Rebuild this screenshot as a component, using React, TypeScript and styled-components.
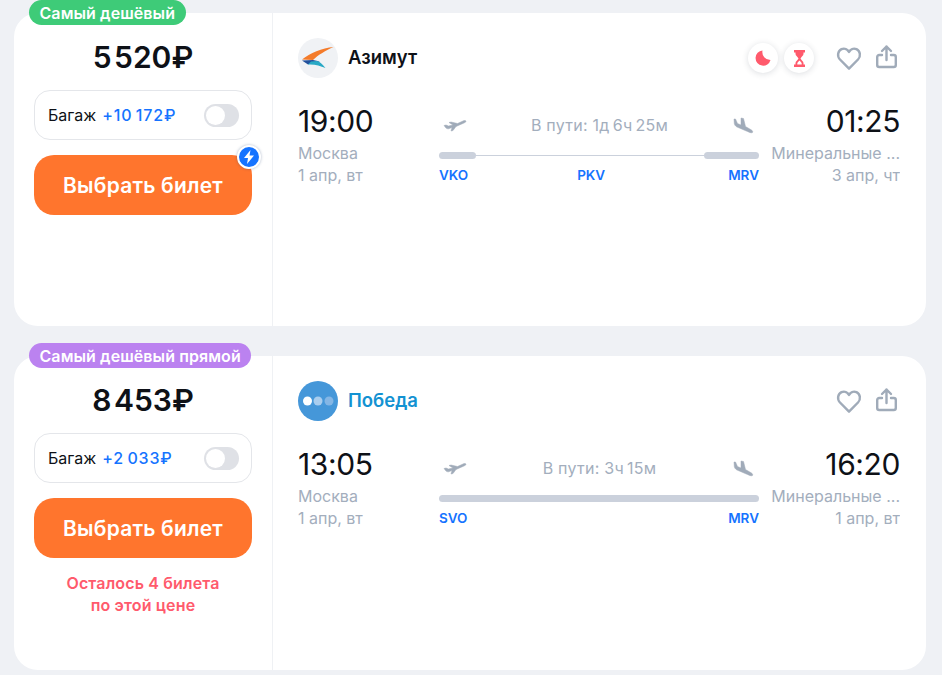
import React from 'react';
import styled, {createGlobalStyle} from 'styled-components';

const GlobalStyle = createGlobalStyle`
  html, body {
    margin: 0;
    padding: 0;
    height: 100%;
    overflow: hidden;
    background: #eff1f5;
    font-family: Inter, "Noto Sans", sans-serif;
    color: #0e1117;
  }
`;

const Page = styled.div`
  display: flex;
  flex-direction: column;
  gap: 30px;
  padding: 13px 16px 0 14px;
`;

const Card = styled.article<{$height: number}>`
  position: relative;
  display: flex;
  height: ${p => p.$height}px;
  background: #fff;
  border-radius: 24px;
`;

const Badge = styled.div<{$color: string}>`
  position: absolute;
  left: 15px;
  top: -13px;
  height: 25px;
  padding: 0 10.5px;
  display: flex;
  align-items: center;
  border-radius: 13px;
  background: ${p => p.$color};
  color: #fff;
  font-size: 16px;
  font-weight: 600;
  letter-spacing: 0.08px;
  line-height: 1;
  white-space: nowrap;
`;

const BuyColumn = styled.div`
  width: 259px;
  flex: none;
  box-sizing: border-box;
  padding: 0 20px;
  border-right: 1px solid #eff1f4;
  display: flex;
  flex-direction: column;
`;

const Price = styled.div`
  height: 77px;
  display: flex;
  align-items: center;
  justify-content: center;
  padding-top: 11px;
  box-sizing: border-box;
  font-size: 30px;
  font-weight: 600;
`;

const BaggageBox = styled.div`
  height: 50px;
  box-sizing: border-box;
  border: 1px solid #e4e6ea;
  border-radius: 16px;
  display: flex;
  align-items: center;
  padding: 0 12px 0 13px;
  font-size: 16px;
`;

const BaggagePrice = styled.span`
  margin-left: 6px;
  color: #1573ff;
  font-weight: 500;
  letter-spacing: 0.8px;
`;

const Toggle = styled.span`
  margin-left: auto;
  width: 35px;
  height: 23px;
  border-radius: 12px;
  background: #dfe1e6;
  display: flex;
  align-items: center;
  padding-left: 2px;
  box-sizing: border-box;

  &::before {
    content: '';
    width: 19px;
    height: 19px;
    border-radius: 50%;
    background: #fff;
  }
`;

const BuyButton = styled.button`
  position: relative;
  margin-top: 15px;
  height: 60px;
  border: 0;
  border-radius: 20px;
  background: #ff752d;
  color: #fff;
  font-family: inherit;
  font-size: 21px;
  font-weight: 600;
  letter-spacing: 0.2px;
  flex: none;
`;

const BoltBadge = styled.span`
  position: absolute;
  right: -9px;
  top: -10px;
  width: 20px;
  height: 20px;
  border: 2px solid #fff;
  border-radius: 50%;
  background: #1573ff;
  box-shadow: 0 0 3px rgba(30, 60, 110, 0.35);
  display: flex;
  align-items: center;
  justify-content: center;
`;

const SeatsLeft = styled.div`
  margin-top: 14px;
  text-align: center;
  color: #ff5a6c;
  font-size: 16px;
  font-weight: 600;
  letter-spacing: 0.15px;
  line-height: 22px;
`;

const FlightColumn = styled.div`
  flex: 1;
  padding: 0 26px 0 25px;
  display: flex;
  flex-direction: column;
`;

const CarrierRow = styled.div`
  height: 40px;
  margin-top: 25px;
  display: flex;
  align-items: center;
`;

const CarrierLogo = styled.svg`
  width: 40px;
  height: 40px;
  flex: none;
`;

const CarrierName = styled.div<{$color: string}>`
  margin: -2px 0 0 10px;
  font-size: 18.5px;
  font-weight: 600;
  color: ${p => p.$color};
`;

const Actions = styled.div`
  margin: 0 -1px 0 auto;
  display: flex;
  align-items: center;
`;

const Hints = styled.div`
  display: flex;
  gap: 6px;
  margin-right: 11px;
`;

const Hint = styled.span`
  width: 30px;
  height: 30px;
  border-radius: 50%;
  background: #fff;
  box-shadow: 0 1px 6px rgba(40, 50, 70, 0.16);
  display: flex;
  align-items: center;
  justify-content: center;
`;

const ActionIcon = styled.svg`
  width: 28px;
  height: 28px;
  margin-left: 10px;
  fill: none;
  stroke: #a0abb9;
  stroke-width: 2.4;
  stroke-linecap: round;
  stroke-linejoin: round;
`;

const Route = styled.div`
  margin-top: 24px;
  display: flex;
`;

const Endpoint = styled.div<{$end?: boolean}>`
  flex: none;
  width: ${p => (p.$end ? 131 : 141)}px;
  margin-left: ${p => (p.$end ? 10 : 0)}px;
  text-align: ${p => (p.$end ? 'right' : 'left')};
`;

const Time = styled.div`
  font-size: 30px;
  line-height: 38px;
  letter-spacing: -0.4px;
`;

const Place = styled.div`
  color: #a3aebd;
  font-size: 16px;
  line-height: 21px;
  white-space: nowrap;
  overflow: hidden;
  text-overflow: ellipsis;
`;

const City = styled(Place)`
  margin: 3px 0 1px;
`;

const Timeline = styled.div`
  flex: none;
  width: 320px;
  display: flex;
  flex-direction: column;
`;

const TimelineHead = styled.div`
  height: 46px;
  display: flex;
  align-items: center;
  justify-content: space-between;
  padding: 0 5px 0 4px;
`;

const Duration = styled.div`
  color: #a3aebd;
  font-size: 16px;
  letter-spacing: 0.25px;
`;

const PlaneIcon = styled.svg`
  fill: #a0abb9;
  stroke: #a0abb9;
  stroke-width: 0.5;
  stroke-linejoin: round;
  flex: none;
`;

const Track = styled.div`
  margin-top: 4px;
  height: 7px;
  display: flex;
  align-items: center;
`;

const TrackLine = styled.div`
  flex: 1;
  height: 1px;
  background: #cbd1dc;
`;

const Segment = styled.div<{$width?: number}>`
  height: 7px;
  border-radius: 4px;
  background: #cbd1dc;
  ${p => (p.$width ? `width: ${p.$width}px; flex: none;` : 'flex: 1;')}
`;

const Airports = styled.div`
  margin-top: 6px;
  display: flex;
  justify-content: space-between;
  color: #1573ff;
  font-size: 13.5px;
  font-weight: 600;
  line-height: 20px;
`;

const Transfer = styled.span`
  margin-right: 14px;
`;

const Takeoff = () => (
  <PlaneIcon width="24" height="14" viewBox="0 0 24 14">
    <path d="M1 7.500L3 7l2.500 1L10 7 6 4.500 8 4l6.500 1.500L20 3c1.500-.7 3-.5 3 .3 0 .7-1 1.200-2.500 1.900L13 8.500l-3 4-2 .5 1-3.500-3.500 1.300c-1 .2-2-.3-2.500-.8z" />
  </PlaneIcon>
);

const Landing = () => (
  <PlaneIcon width="22" height="18" viewBox="0 0 22 18">
    <path d="M2 3h1.500l2 4.500L9 9V2l2.500.5 2 8 6 3.500c1.500 1 1.500 2.500.5 2.800-1 .2-3-.6-4.500-1.300L5 11C3.500 10.300 2.500 9 2.300 7.500z" />
  </PlaneIcon>
);

const Heart = () => (
  <ActionIcon viewBox="0 0 28 28">
    <path d="M14 24.700L5 15.500C1.800 12 2.800 7 6.500 5.200 9.500 3.800 12.500 5.200 14 8c1.500-2.800 4.500-4.200 7.500-2.800C25.200 7 26.200 12 23 15.500z" />
  </ActionIcon>
);

const Share = () => (
  <ActionIcon viewBox="0 0 28 28">
    <path d="M13.500 16V2.500M9 7l4.500-4.500L18 7" />
    <path d="M9 11H6.200a2 2 0 0 0-2 2v8a2 2 0 0 0 2 2h14.600a2 2 0 0 0 2-2v-8a2 2 0 0 0-2-2H18" />
  </ActionIcon>
);

const Moon = () => (
  <svg width="16" height="16" viewBox="0 0 16 16">
    <path d="M7.500.5A7.600 7.600 0 1 0 15.500 10 8 8 0 0 1 7.500.5z" fill="#ff5a6c" />
  </svg>
);

const Hourglass = () => (
  <svg width="11" height="17" viewBox="0 0 11 17">
    <path d="M0 0h11v2.500H9.500V4c0 1.800-2.500 3-3 4.500.5 1.500 3 2.700 3 4.500v1.500H11V17H0v-2.500h1.500V13c0-1.800 2.500-3 3-4.500C4 7 1.500 5.800 1.500 4V2.500H0z" fill="#ff5a6c" />
    <path d="M5.500 10.500C4.700 11.500 3.300 12.300 3.300 13.500v1h4.400v-1c0-1.200-1.400-2-2.200-3z" fill="#fff" />
  </svg>
);

const AzimutLogo = () => (
  <CarrierLogo viewBox="0 0 40 40">
    <circle cx="20" cy="20" r="20" fill="#f0f2f5" />
    <path d="M4 21.500C12 15 24 10 35.500 9 28 12.500 20 17 15 22z" fill="#f47b2a" />
    <path d="M4 22.500L15 22l7 1.500c-6 1-10 2-12 3z" fill="#22509c" />
    <path d="M13 23.500l6-.5c3 .5 5 3 8.500 7-5.500-2-10.500-4-17.500-3.500z" fill="#29a9c5" />
  </CarrierLogo>
);

const PobedaLogo = () => (
  <CarrierLogo viewBox="0 0 40 40">
    <circle cx="20" cy="20" r="20" fill="#4597d9" />
    <circle cx="9.500" cy="20" r="4.500" fill="#fff" />
    <circle cx="20" cy="20" r="4.500" fill="#a9cdee" />
    <circle cx="31" cy="20" r="4.500" fill="#84b6e5" />
  </CarrierLogo>
);

const App: React.FC = () => (
  <Page>
    <GlobalStyle />

    <Card $height={313}>
      <Badge $color="#3ecb78">Самый дешёвый</Badge>
      <BuyColumn>
        <Price>5&#8202;520₽</Price>
        <BaggageBox>
          Багаж
          <BaggagePrice>+10&#8201;172₽</BaggagePrice>
          <Toggle />
        </BaggageBox>
        <BuyButton>
          Выбрать билет
          <BoltBadge>
            <svg width="12" height="14" viewBox="0 0 12 14">
              <path d="M7.500 0L1 8h4l-1 6 7-8.500H6.500z" fill="#fff" />
            </svg>
          </BoltBadge>
        </BuyButton>
      </BuyColumn>
      <FlightColumn>
        <CarrierRow>
          <AzimutLogo />
          <CarrierName $color="#0e1117">Азимут</CarrierName>
          <Actions>
            <Hints>
              <Hint>
                <Moon />
              </Hint>
              <Hint>
                <Hourglass />
              </Hint>
            </Hints>
            <Heart />
            <Share />
          </Actions>
        </CarrierRow>
        <Route>
          <Endpoint>
            <Time>19:00</Time>
            <City>Москва</City>
            <Place>1 апр, вт</Place>
          </Endpoint>
          <Timeline>
            <TimelineHead>
              <Takeoff />
              <Duration>В пути: 1д&#8201;6ч&#8201;25м</Duration>
              <Landing />
            </TimelineHead>
            <Track>
              <Segment $width={37} />
              <TrackLine />
              <Segment $width={55} />
            </Track>
            <Airports>
              <span>VKO</span>
              <Transfer>PKV</Transfer>
              <span>MRV</span>
            </Airports>
          </Timeline>
          <Endpoint $end>
            <Time>01:25</Time>
            <City>Минеральные ...</City>
            <Place>3 апр, чт</Place>
          </Endpoint>
        </Route>
      </FlightColumn>
    </Card>

    <Card $height={314}>
      <Badge $color="#bb82f0">Самый дешёвый прямой</Badge>
      <BuyColumn>
        <Price>8&#8202;453₽</Price>
        <BaggageBox>
          Багаж
          <BaggagePrice>+2&#8201;033₽</BaggagePrice>
          <Toggle />
        </BaggageBox>
        <BuyButton>Выбрать билет</BuyButton>
        <SeatsLeft>
          Осталось 4 билета
          <br />
          по этой цене
        </SeatsLeft>
      </BuyColumn>
      <FlightColumn>
        <CarrierRow>
          <PobedaLogo />
          <CarrierName $color="#1392d2">Победа</CarrierName>
          <Actions>
            <Heart />
            <Share />
          </Actions>
        </CarrierRow>
        <Route>
          <Endpoint>
            <Time>13:05</Time>
            <City>Москва</City>
            <Place>1 апр, вт</Place>
          </Endpoint>
          <Timeline>
            <TimelineHead>
              <Takeoff />
              <Duration>В пути: 3ч&#8201;15м</Duration>
              <Landing />
            </TimelineHead>
            <Track>
              <Segment />
            </Track>
            <Airports>
              <span>SVO</span>
              <span>MRV</span>
            </Airports>
          </Timeline>
          <Endpoint $end>
            <Time>16:20</Time>
            <City>Минеральные ...</City>
            <Place>1 апр, вт</Place>
          </Endpoint>
        </Route>
      </FlightColumn>
    </Card>
  </Page>
);

export default App;
